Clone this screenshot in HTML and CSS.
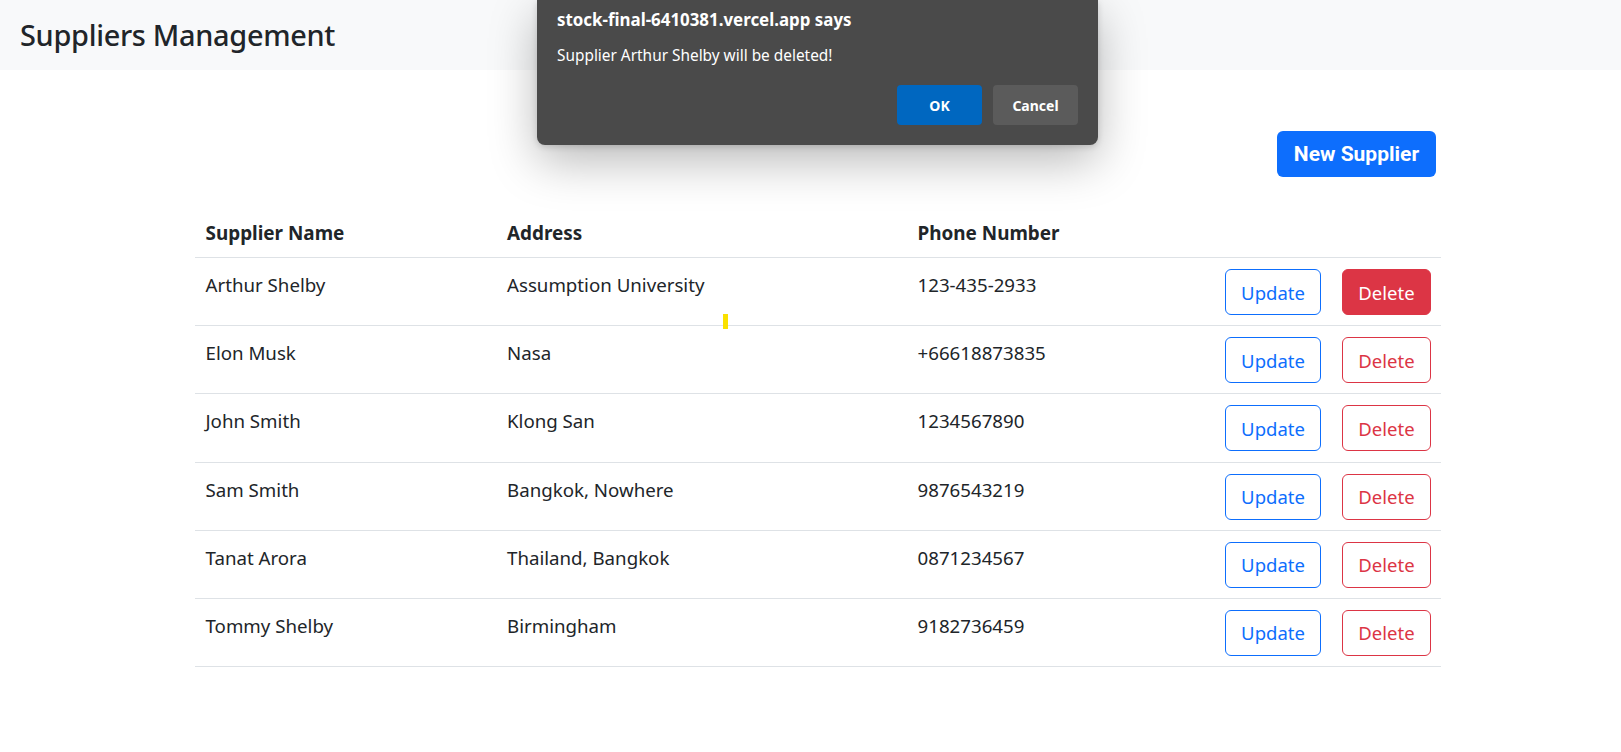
FILE: index.html
```html
<!DOCTYPE html>
<html lang="en">
<head>
<meta charset="utf-8">
<title>Suppliers Management</title>
<link rel="stylesheet" href="styles.css">
</head>
<body>
<header class="navbar">
  <h1 class="brand">Suppliers Management</h1>
</header>
<main class="container">
  <div class="toolbar">
    <button class="btn-new">New Supplier</button>
  </div>
  <table class="table">
    <thead>
      <tr>
        <th class="c-name">Supplier Name</th>
        <th class="c-addr">Address</th>
        <th class="c-phone">Phone Number</th>
        <th class="c-act"></th>
      </tr>
    </thead>
    <tbody>
      <tr>
        <td>Arthur Shelby</td><td>Assumption University</td><td>123-435-2933</td>
        <td class="actions"><button class="btn btn-update">Update</button><button class="btn btn-delete is-active">Delete</button></td>
      </tr>
      <tr>
        <td>Elon Musk</td><td>Nasa</td><td>+66618873835</td>
        <td class="actions"><button class="btn btn-update">Update</button><button class="btn btn-delete">Delete</button></td>
      </tr>
      <tr>
        <td>John Smith</td><td>Klong San</td><td>1234567890</td>
        <td class="actions"><button class="btn btn-update">Update</button><button class="btn btn-delete">Delete</button></td>
      </tr>
      <tr>
        <td>Sam Smith</td><td>Bangkok, Nowhere</td><td>9876543219</td>
        <td class="actions"><button class="btn btn-update">Update</button><button class="btn btn-delete">Delete</button></td>
      </tr>
      <tr>
        <td>Tanat Arora</td><td>Thailand, Bangkok</td><td>0871234567</td>
        <td class="actions"><button class="btn btn-update">Update</button><button class="btn btn-delete">Delete</button></td>
      </tr>
      <tr>
        <td>Tommy Shelby</td><td>Birmingham</td><td>9182736459</td>
        <td class="actions"><button class="btn btn-update">Update</button><button class="btn btn-delete">Delete</button></td>
      </tr>
    </tbody>
  </table>
</main>
<div class="cursor-mark"></div>
<div class="dialog" role="alertdialog">
  <div class="dialog-title">stock-final-6410381.vercel.app says</div>
  <div class="dialog-msg">Supplier Arthur Shelby will be deleted!</div>
  <div class="dialog-actions">
    <button class="dbtn dbtn-ok">OK</button>
    <button class="dbtn dbtn-cancel">Cancel</button>
  </div>
</div>
</body>
</html>
```
FILE: styles.css
```css
html, body {
  margin: 0;
  padding: 0;
  background: #fff;
}
body {
  font-family: "Noto Sans", "Open Sans", sans-serif;
  color: #212529;
  font-size: 18.7px;
  position: relative;
  min-height: 752px;
}
.navbar {
  height: 70px;
  background: #f8f9fa;
  display: flex;
  align-items: center;
  padding-left: 20px;
}
.brand {
  margin: 0;
  font-size: 28.9px;
  font-weight: 500;
  letter-spacing: -0.3px;
  line-height: 1;
  color: #212529;
}
.container {
  margin-left: 195px;
  width: 1246px;
}
.toolbar {
  display: flex;
  justify-content: flex-end;
  padding-top: 61px;
  padding-right: 5px;
}
.btn-new {
  height: 46px;
  width: 159px;
  border: none;
  border-radius: 6px;
  background: #0d6efd;
  color: #fff;
  font-family: Roboto, "Liberation Sans", sans-serif;
  font-weight: 700;
  font-size: 21px;
  padding: 0;
}
.table {
  margin-top: 36px;
  width: 1246px;
  border-collapse: collapse;
  table-layout: fixed;
}
.table th {
  text-align: left;
  font-weight: 700;
  font-size: 18.9px;
  padding: 7px 10px 11px 10.5px;
  height: 26px;
  line-height: 26px;
  border-bottom: 1px solid #dee2e6;
}
.c-name { width: 281px; }
.c-addr { width: 390px; }
.c-phone { width: 270px; }
.table td {
  vertical-align: top;
  font-size: 18.7px;
  line-height: 26px;
  padding: 14px 10px 27.2px 10.5px;
  border-bottom: 1px solid #dee2e6;
  white-space: nowrap;
}
.table td.actions {
  text-align: right;
  padding: 11px 10px 10.2px 10px;
}
.btn {
  height: 46px;
  border-radius: 6px;
  background: #fff;
  font-family: "Noto Sans", "Open Sans", sans-serif;
  font-size: 18.5px;
  padding: 0;
  vertical-align: top;
}
.btn-update {
  width: 96px;
  border: 1px solid #0d6efd;
  color: #0d6efd;
}
.btn-delete {
  width: 89px;
  margin-left: 21px;
  border: 1px solid #dc3545;
  color: #dc3545;
}
.btn-delete.is-active {
  background: #dc3545;
  color: #fff;
}
.cursor-mark {
  position: absolute;
  left: 723px;
  top: 314px;
  width: 5px;
  height: 15px;
  background: #fae100;
}
.dialog {
  position: absolute;
  left: 537px;
  top: 0;
  width: 561px;
  height: 145px;
  box-sizing: border-box;
  background: #4a4a4a;
  border-radius: 0 0 8px 8px;
  box-shadow: 0 16px 48px rgba(0, 0, 0, 0.28), 0 2px 6px rgba(0, 0, 0, 0.15);
  padding: 9px 20px 0 20px;
  color: #fff;
  font-family: "Noto Sans", "Open Sans", sans-serif;
}
.dialog-title {
  font-weight: 700;
  font-size: 16.9px;
  line-height: 22px;
}
.dialog-msg {
  margin-top: 14px;
  font-size: 15.4px;
  line-height: 22px;
}
.dialog-actions {
  margin-top: 18px;
  display: flex;
  justify-content: flex-end;
  gap: 11px;
}
.dbtn {
  width: 85px;
  height: 40px;
  border: none;
  border-radius: 4px;
  color: #fff;
  font-family: "Noto Sans", "Open Sans", sans-serif;
  font-weight: 700;
  font-size: 14px;
  padding: 0;
}
.dbtn-ok {
  background: #0067c0;
}
.dbtn-cancel {
  background: #5b5b5b;
}
```
